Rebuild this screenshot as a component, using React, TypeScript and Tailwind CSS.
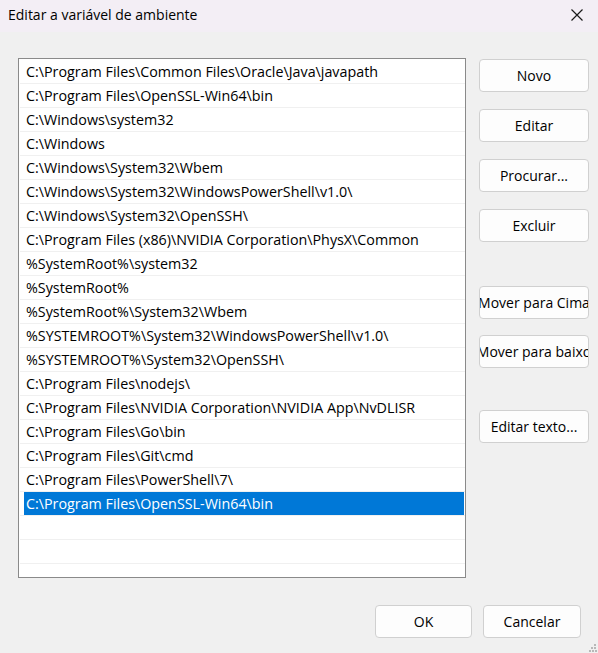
const paths = [
  "C:\\Program Files\\Common Files\\Oracle\\Java\\javapath",
  "C:\\Program Files\\OpenSSL-Win64\\bin",
  "C:\\Windows\\system32",
  "C:\\Windows",
  "C:\\Windows\\System32\\Wbem",
  "C:\\Windows\\System32\\WindowsPowerShell\\v1.0\\",
  "C:\\Windows\\System32\\OpenSSH\\",
  "C:\\Program Files (x86)\\NVIDIA Corporation\\PhysX\\Common",
  "%SystemRoot%\\system32",
  "%SystemRoot%",
  "%SystemRoot%\\System32\\Wbem",
  "%SYSTEMROOT%\\System32\\WindowsPowerShell\\v1.0\\",
  "%SYSTEMROOT%\\System32\\OpenSSH\\",
  "C:\\Program Files\\nodejs\\",
  "C:\\Program Files\\NVIDIA Corporation\\NVIDIA App\\NvDLISR",
  "C:\\Program Files\\Go\\bin",
  "C:\\Program Files\\Git\\cmd",
  "C:\\Program Files\\PowerShell\\7\\",
  "C:\\Program Files\\OpenSSL-Win64\\bin",
];

const selected = 18;

function Button({ label, className = "" }: { label: string; className?: string }) {
  return (
    <button
      className={
        "flex h-[33px] shrink-0 items-center justify-center overflow-hidden whitespace-nowrap rounded-[4px] border border-[#d0d0d0] bg-[#fdfdfd] text-[14px] text-black " +
        className
      }
    >
      <span className="shrink-0">{label}</span>
    </button>
  );
}

export default function App() {
  return (
    <div
      className="relative flex h-[653px] w-[598px] flex-col bg-[#f0f0f0] text-black"
      style={{ fontFamily: "'Segoe UI', 'Open Sans', 'Noto Sans', sans-serif" }}
    >
      <div className="flex h-[32px] items-center justify-between bg-[#f3eef5] pb-[3px] pl-[8px] pr-[15px]">
        <span className="text-[14px]">Editar a variável de ambiente</span>
        <svg width="12" height="12" viewBox="0 0 12 12" className="mt-[1px]">
          <path d="M0.5 0.5 L11.5 11.5 M11.5 0.5 L0.5 11.5" stroke="#1a1a1a" strokeWidth="1.2" />
        </svg>
      </div>

      <div className="flex flex-1 flex-col pl-[18px] pr-[9px] pt-[26px]">
        <div className="flex gap-[13px]">
          <div className="h-[520px] w-[448px] shrink-0 overflow-hidden border border-[#8a8a8a] bg-white pl-[1px] pt-[1px]">
            {[...paths, "", "", ""].map((p, i) => (
              <div key={i} className="h-[24px] border-b border-[#f0f0f0] pr-[1px]">
                <div
                  className={
                    "ml-[4px] flex h-[23px] items-center whitespace-nowrap pl-[2px] pt-[1px] text-[14.3px] " +
                    (i === selected ? "bg-[#0078d7] text-white" : "")
                  }
                >
                  {p}
                </div>
              </div>
            ))}
          </div>

          <div className="flex w-[110px] shrink-0 flex-col pt-[1px]">
            <Button label="Novo" />
            <Button label="Editar" className="mt-[17px]" />
            <Button label="Procurar..." className="mt-[17px]" />
            <Button label="Excluir" className="mt-[17px]" />
            <Button label="Mover para Cima" className="mt-[44px] text-[14.6px]" />
            <Button label="Mover para baixo" className="mt-[16px] text-[14.6px]" />
            <Button label="Editar texto..." className="mt-[42px]" />
          </div>
        </div>

        <div className="mt-[27px] flex justify-end gap-[11px] pr-[8px]">
          <Button label="OK" className="w-[97px]" />
          <Button label="Cancelar" className="w-[98px]" />
        </div>
      </div>

      <svg width="8" height="8" viewBox="0 0 8 8" className="absolute bottom-[1px] right-[1px]">
        <rect x="5" y="0" width="2" height="2" fill="#b8b8b8" />
        <rect x="2" y="3" width="2" height="2" fill="#b8b8b8" />
        <rect x="5" y="3" width="2" height="2" fill="#b8b8b8" />
        <rect x="0" y="6" width="2" height="2" fill="#b8b8b8" />
        <rect x="3" y="6" width="2" height="2" fill="#b8b8b8" />
        <rect x="6" y="6" width="2" height="2" fill="#b8b8b8" />
      </svg>
    </div>
  );
}
